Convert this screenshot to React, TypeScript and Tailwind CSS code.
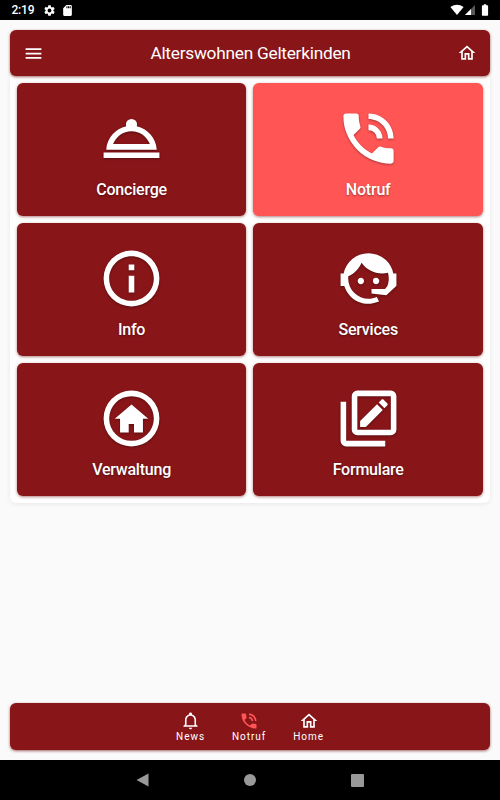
import type { ReactNode } from 'react'

const icons = {
    concierge: 'M12 5A2 2 0 0 0 10 7A2 2 0 0 0 10.16 7.65C6.2 8.5 3.2 11.9 2.95 16H21.05C20.8 11.9 17.8 8.5 13.84 7.65A2 2 0 0 0 14 7A2 2 0 0 0 12 5M22 19H2V17H22V19M12 9.4C15 9.4 17.5 11.3 18.6 14H5.4C6.5 11.3 9 9.4 12 9.4Z',
    phone: 'M15,12H17A5,5 0 0,0 12,7V9A3,3 0 0,1 15,12M19,12H21C21,7 16.97,3 12,3V5C15.86,5 19,8.13 19,12M20,15.5C18.75,15.5 17.55,15.3 16.43,14.93C16.08,14.82 15.69,14.9 15.41,15.18L13.21,17.38C10.38,15.94 8.06,13.62 6.62,10.79L8.82,8.59C9.1,8.31 9.18,7.92 9.07,7.57C8.7,6.45 8.5,5.25 8.5,4A1,1 0 0,0 7.5,3H4A1,1 0 0,0 3,4A17,17 0 0,0 20,21A1,1 0 0,0 21,20V16.5A1,1 0 0,0 20,15.5Z',
    info: 'M11,9H13V7H11M12,20C7.59,20 4,16.41 4,12C4,7.59 7.59,4 12,4C16.41,4 20,7.59 20,12C20,16.41 16.41,20 12,20M12,2A10,10 0 0,0 2,12A10,10 0 0,0 12,22A10,10 0 0,0 22,12A10,10 0 0,0 12,2M11,17H13V11H11V17Z',
    agent: 'M18.72,14.76C19.07,13.91 19.26,13 19.26,12C19.26,11.28 19.15,10.59 18.96,9.95C18.31,10.1 17.63,10.18 16.92,10.18C13.86,10.18 11.15,8.67 9.5,6.34C8.61,8.5 6.91,10.26 4.77,11.22C4.73,11.47 4.73,11.74 4.73,12A7.27,7.27 0 0,0 12,19.27C13.05,19.27 14.06,19.04 14.97,18.63C15.54,19.72 15.8,20.26 15.78,20.26C14.14,20.81 12.87,21.08 12,21.08C9.58,21.08 7.27,20.13 5.57,18.42C4.53,17.38 3.76,16.11 3.33,14.73H2V10.18H3.09C3.93,6.04 7.6,2.92 12,2.92C14.4,2.92 16.71,3.87 18.42,5.58C19.69,6.84 20.54,8.45 20.89,10.18H22V14.73H21.94L18.38,18L13.08,17.4V15.73H17.91L18.72,14.76M9.27,11.77C9.57,11.77 9.86,11.89 10.07,12.11C10.28,12.32 10.4,12.61 10.4,12.91C10.4,13.21 10.28,13.5 10.07,13.71C9.86,13.92 9.57,14.04 9.27,14.04C8.64,14.04 8.13,13.54 8.13,12.91C8.13,12.28 8.64,11.77 9.27,11.77M14.72,11.77C15.35,11.77 15.85,12.28 15.85,12.91C15.85,13.54 15.35,14.04 14.72,14.04C14.09,14.04 13.58,13.54 13.58,12.91A1.14,1.14 0 0,1 14.72,11.77Z',
    houseCircle: 'M12 2A10 10 0 1 0 22 12A10 10 0 0 0 12 2M12 20A8 8 0 1 1 20 12A8 8 0 0 1 12 20M12 7L6 12.1H7.9V17H11V14H12.9V17H16.1V12.1H18Z',
    forms: 'M4,6V20H18V22H4A2,2 0 0,1 2,20V6H4M20,2A2,2 0 0,1 22,4V16A2,2 0 0,1 20,18H8A2,2 0 0,1 6,16V4A2,2 0 0,1 8,2H20M8,4V16H20V4H8M18.7,7.35L17.7,8.35L15.65,6.3L16.65,5.3C16.86,5.08 17.21,5.08 17.42,5.3L18.7,6.58C18.92,6.79 18.92,7.14 18.7,7.35M9,12.94L15.06,6.88L17.12,8.94L11.06,15H9V12.94Z',
    home: 'M12 5.69L17 10.19V18H15V12H9V18H7V10.19L12 5.69M12 3L2 12H5V20H11V14H13V20H19V12H22L12 3Z',
    bell: 'M10 21H14C14 22.1 13.1 23 12 23S10 22.1 10 21M21 19V20H3V19L5 17V11C5 7.9 7 5.2 10 4.3V4C10 2.9 10.9 2 12 2S14 2.9 14 4V4.3C17 5.2 19 7.9 19 11V17L21 19M17 11C17 8.2 14.8 6 12 6S7 8.2 7 11V18H17V11Z',
    menu: 'M3,6H21V8H3V6M3,11H21V13H3V11M3,16H21V18H3V16Z',
    cog: 'M19.14 12.94a7 7 0 0 0 0-1.88l2.03-1.58a.5.5 0 0 0 .12-.61l-1.92-3.32a.5.5 0 0 0-.59-.22l-2.39.96a7 7 0 0 0-1.62-.94l-.36-2.54a.5.5 0 0 0-.48-.41h-3.84a.5.5 0 0 0-.47.41l-.36 2.54a7 7 0 0 0-1.62.94l-2.39-.96a.5.5 0 0 0-.59.22L2.74 8.87a.5.5 0 0 0 .12.61l2.03 1.58a7 7 0 0 0 0 1.88l-2.03 1.58a.5.5 0 0 0-.12.61l1.92 3.32c.12.22.37.29.59.22l2.39-.96c.5.38 1.03.7 1.62.94l.36 2.54c.05.24.24.41.48.41h3.84c.24 0 .44-.17.47-.41l.36-2.54a7 7 0 0 0 1.62-.94l2.39.96c.22.08.47 0 .59-.22l1.92-3.32a.5.5 0 0 0-.12-.61zM12 15.6a3.6 3.6 0 1 1 0-7.2 3.6 3.6 0 0 1 0 7.2z',
    sdCard: 'M18 2h-8L4 8v12a2 2 0 0 0 2 2h12a2 2 0 0 0 2-2V4a2 2 0 0 0-2-2zm-6 6h-2V4h2v4zm3 0h-2V4h2v4zm3 0h-2V4h2v4z',
    battery: 'M16 4h-2V2h-4v2H8a1.3 1.3 0 0 0-1.3 1.3v15.4A1.3 1.3 0 0 0 8 22h8a1.3 1.3 0 0 0 1.3-1.3V5.3A1.3 1.3 0 0 0 16 4z',
}

type IconName = keyof typeof icons

const Icon = ({ name, className }: { name: IconName; className: string }) => (
    <svg viewBox="0 0 24 24" fill="currentColor" fillRule="evenodd" className={className}>
        <path d={icons[name]} />
    </svg>
)

const tiles: { label: string; icon: IconName; alert?: boolean }[] = [
    { label: 'Concierge', icon: 'concierge' },
    { label: 'Notruf', icon: 'phone', alert: true },
    { label: 'Info', icon: 'info' },
    { label: 'Services', icon: 'agent' },
    { label: 'Verwaltung', icon: 'houseCircle' },
    { label: 'Formulare', icon: 'forms' },
]

const StatusBar = () => (
    <div className="h-5 shrink-0 bg-black text-white flex items-center pl-[11.5px] pr-2">
        <span className="text-[12px] leading-5 font-medium w-[31.5px] tracking-[-0.2px]">2:19</span>
        <Icon name="cog" className="w-[13px] h-[13px]" />
        <Icon name="sdCard" className="w-[13px] h-[13px] ml-[5px]" />
        <svg viewBox="0 0 14 12" className="w-[14px] h-3 ml-auto" fill="currentColor">
            <path d="M7 11L0.4 3Q7 -1.6 13.6 3Z" />
        </svg>
        <svg viewBox="0 0 10 10" className="w-[10px] h-[10px] ml-px" fill="currentColor">
            <path d="M0 10L10 0V10Z" opacity="0.35" />
            <path d="M0 10L6 4V10Z" />
        </svg>
        <Icon name="battery" className="w-[14px] h-[14px] ml-[3px]" />
    </div>
)

const Bar = ({ children, className }: { children: ReactNode; className: string }) => (
    <div className={`bg-[#881518] rounded-[6px] shadow-[0_1px_3px_rgba(100,0,0,0.6)] text-white flex items-center shrink-0 ${className}`}>
        {children}
    </div>
)

const App = () => {
    return (
        <div className="w-full h-screen bg-[#fafafa] flex flex-col overflow-hidden font-['Roboto',sans-serif]">
            <StatusBar />
            <Bar className="mx-[10px] mt-[10px] h-[46.4px] justify-between px-[13px] z-10">
                <Icon name="menu" className="w-[21px] h-[21px]" />
                <h1 className="text-[17.3px] leading-6 font-normal tracking-[-0.26px]">Alterswohnen Gelterkinden</h1>
                <Icon name="home" className="w-5 h-5" />
            </Bar>
            <div className="mx-[10px] bg-white rounded-b-[6px] pl-[6.8px] pr-[7px] pt-[7px] pb-[7px] grid grid-cols-2 gap-[7px] shadow-[0_1px_5px_rgba(0,0,0,0.08)]">
                {tiles.map(({ label, icon, alert }) => (
                    <div
                        key={label}
                        className={`h-[133px] rounded-[6px] flex flex-col items-center text-white pt-[21.5px] shadow-[0_1px_3px_rgba(100,0,0,0.5)] ${alert ? 'bg-[#ff5555]' : 'bg-[#881518]'}`}
                    >
                        <Icon name={icon} className="w-[67px] h-[67px] drop-shadow-[0_1px_1px_rgba(0,0,0,0.35)]" />
                        <p className="mt-[8px] text-[16px] leading-5 font-medium tracking-[-0.22px] [text-shadow:0_1px_2px_rgba(0,0,0,0.4)]">
                            {label}
                        </p>
                    </div>
                ))}
            </div>
            <Bar className="mx-[10px] mt-auto mb-[10px] h-[46.7px] justify-center gap-[27px]">
                <div className="flex flex-col items-center">
                    <Icon name="bell" className="w-[19px] h-[19px] my-[0.5px]" />
                    <span className="text-[10px] leading-3 tracking-[0.95px]">News</span>
                </div>
                <div className="flex flex-col items-center">
                    <Icon name="phone" className="w-5 h-5 text-[#ff5555]" />
                    <span className="text-[10px] leading-3 tracking-[0.95px]">Notruf</span>
                </div>
                <div className="flex flex-col items-center">
                    <Icon name="home" className="w-5 h-5" />
                    <span className="text-[10px] leading-3 tracking-[0.95px]">Home</span>
                </div>
            </Bar>
            <div className="h-10 shrink-0 bg-black text-[#999999] flex items-center justify-center gap-[94px]">
                <svg viewBox="0 0 13 14" className="w-[13px] h-[14px]" fill="currentColor">
                    <path d="M0.5 7L12.5 0.5V13.5Z" />
                </svg>
                <div className="w-3 h-3 ml-px mr-px rounded-full bg-[#999999]" />
                <div className="w-[13px] h-[13px] mr-px rounded-[1px] bg-[#999999]" />
            </div>
        </div>
    )
}

export default App
